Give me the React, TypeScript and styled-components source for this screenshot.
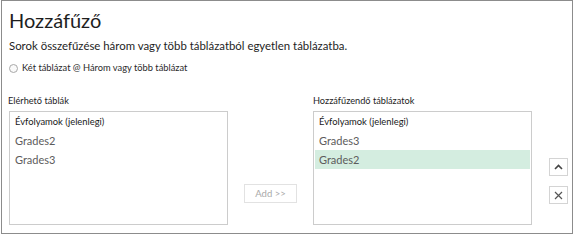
import styled, { createGlobalStyle } from "styled-components"

const GlobalStyle = createGlobalStyle`
  html, body {
    margin: 0;
    padding: 0;
    background: #ffffff;
  }
  body {
    font-family: Lato, "Open Sans", sans-serif;
    color: #222222;
  }
`

const Dialog = styled.div`
  box-sizing: border-box;
  width: 572px;
  height: 234px;
  margin-left: 1px;
  border: 1px solid #8c8c8c;
  padding: 7px 0 0 7px;
  display: flex;
  flex-direction: column;
`

const Title = styled.h1`
  margin: 0;
  font-size: 20px;
  font-weight: 400;
  line-height: 24px;
  color: #1e1e1e;
`

const Subtitle = styled.p`
  margin: 6px 0 0;
  font-size: 11.4px;
  line-height: 16px;
  color: #1e1e1e;
`

const RadioRow = styled.label`
  display: flex;
  align-items: center;
  gap: 4px;
  margin-top: 7px;
  font-size: 9.3px;
  line-height: 14px;
  color: #2a2a2a;
`

const RadioDot = styled.span`
  box-sizing: border-box;
  width: 9px;
  height: 9px;
  border-radius: 50%;
  border: 1px solid #a8a8a8;
  background: #fafafa;
`

const Panels = styled.div`
  display: flex;
  align-items: flex-start;
  margin-top: 19px;
`

const Column = styled.div`
  display: flex;
  flex-direction: column;
  width: 219px;
`

const ColumnLabel = styled.div<{ $indent?: number }>`
  font-size: 9.2px;
  line-height: 14px;
  height: 14px;
  margin-left: ${(p) => p.$indent ?? 0}px;
  color: #1e1e1e;
`

const ListBox = styled.ul`
  box-sizing: border-box;
  list-style: none;
  margin: 3px 0 0;
  padding: 0 1px;
  width: 219px;
  height: 114px;
  border: 1px solid #cccccc;
`

const ListItem = styled.li<{ $current?: boolean; $selected?: boolean }>`
  height: 19px;
  line-height: 19px;
  padding-left: 4px;
  font-size: ${(p) => (p.$current ? "9.4px" : "11px")};
  color: ${(p) => (p.$current ? "#1a1a1a" : "#5c5c5c")};
  background: ${(p) => (p.$selected ? "#d4ede0" : "transparent")};
`

const Middle = styled.div`
  width: 85px;
  display: flex;
  justify-content: center;
  padding-top: 90px;
`

const AddButton = styled.button`
  box-sizing: border-box;
  width: 53px;
  height: 19px;
  padding: 0;
  border: 1px solid #e2e2e2;
  background: #ffffff;
  color: #a9a9a9;
  font-family: inherit;
  font-size: 9.5px;
`

const SideButtons = styled.div`
  display: flex;
  flex-direction: column;
  gap: 10px;
  margin-left: 17px;
  padding-top: 64px;
`

const IconButton = styled.button`
  box-sizing: border-box;
  width: 19px;
  height: 18px;
  padding: 0;
  border: 1px solid #d4d4d4;
  background: #ffffff;
  display: flex;
  align-items: center;
  justify-content: center;
`

const available = ["Grades2", "Grades3"]
const toAppend = ["Grades3", "Grades2"]

export default function App() {
  return (
    <>
      <GlobalStyle />
      <Dialog>
        <Title>Hozzáfűző</Title>
        <Subtitle>Sorok összefűzése három vagy több táblázatból egyetlen táblázatba.</Subtitle>
        <RadioRow>
          <RadioDot />
          Két táblázat @ Három vagy több táblázat
        </RadioRow>
        <Panels>
          <Column>
            <ColumnLabel $indent={-1}>Elérhető táblák</ColumnLabel>
            <ListBox>
              <ListItem $current>Évfolyamok (jelenlegi)</ListItem>
              {available.map((t) => (
                <ListItem key={t}>{t}</ListItem>
              ))}
            </ListBox>
          </Column>
          <Middle>
            <AddButton>Add &gt;&gt;</AddButton>
          </Middle>
          <Column>
            <ColumnLabel>Hozzáfűzendő táblázatok</ColumnLabel>
            <ListBox>
              <ListItem $current>Évfolyamok (jelenlegi)</ListItem>
              {toAppend.map((t, i) => (
                <ListItem key={t} $selected={i === 1}>
                  {t}
                </ListItem>
              ))}
            </ListBox>
          </Column>
          <SideButtons>
            <IconButton aria-label="Fel">
              <svg width="9" height="6" viewBox="0 0 9 6">
                <path d="M1 5 L4.5 1.5 L8 5" fill="none" stroke="#444" strokeWidth="1.6" />
              </svg>
            </IconButton>
            <IconButton aria-label="Eltávolítás">
              <svg width="9" height="9" viewBox="0 0 9 9">
                <path d="M1 1 L8 8 M8 1 L1 8" fill="none" stroke="#555" strokeWidth="1.2" />
              </svg>
            </IconButton>
          </SideButtons>
        </Panels>
      </Dialog>
    </>
  )
}
